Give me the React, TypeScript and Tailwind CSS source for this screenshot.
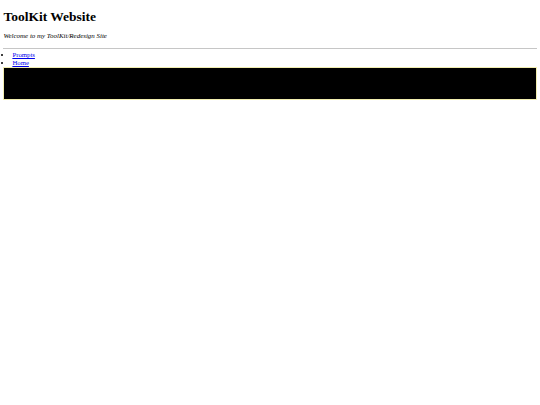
export default function App() {
  return (
    <div className="min-h-[405px] bg-white px-[3.4px] pt-[9px] font-['Liberation_Serif',serif] text-black">
      <h1 className="text-[13.5px] font-bold leading-[15.5px]">ToolKit Website</h1>
      <p className="mt-[8.5px] text-[6.95px] italic leading-[7.8px]">Welcome to my ToolKit/Redesign Site</p>
      <hr className="mt-[7px] border-0 border-t border-[#c6c6c6]" />
      <ul className="mt-[2.5px] list-disc pl-[9px] text-[6.75px] leading-[7.7px]">
        <li>
          <a href="#" className="text-[#0000ee] underline">Prompts</a>
        </li>
        <li>
          <a href="#" className="text-[#0000ee] underline">Home</a>
        </li>
      </ul>
      <div className="h-[33px] border border-[#f2eeb0] bg-black" />
    </div>
  );
}
